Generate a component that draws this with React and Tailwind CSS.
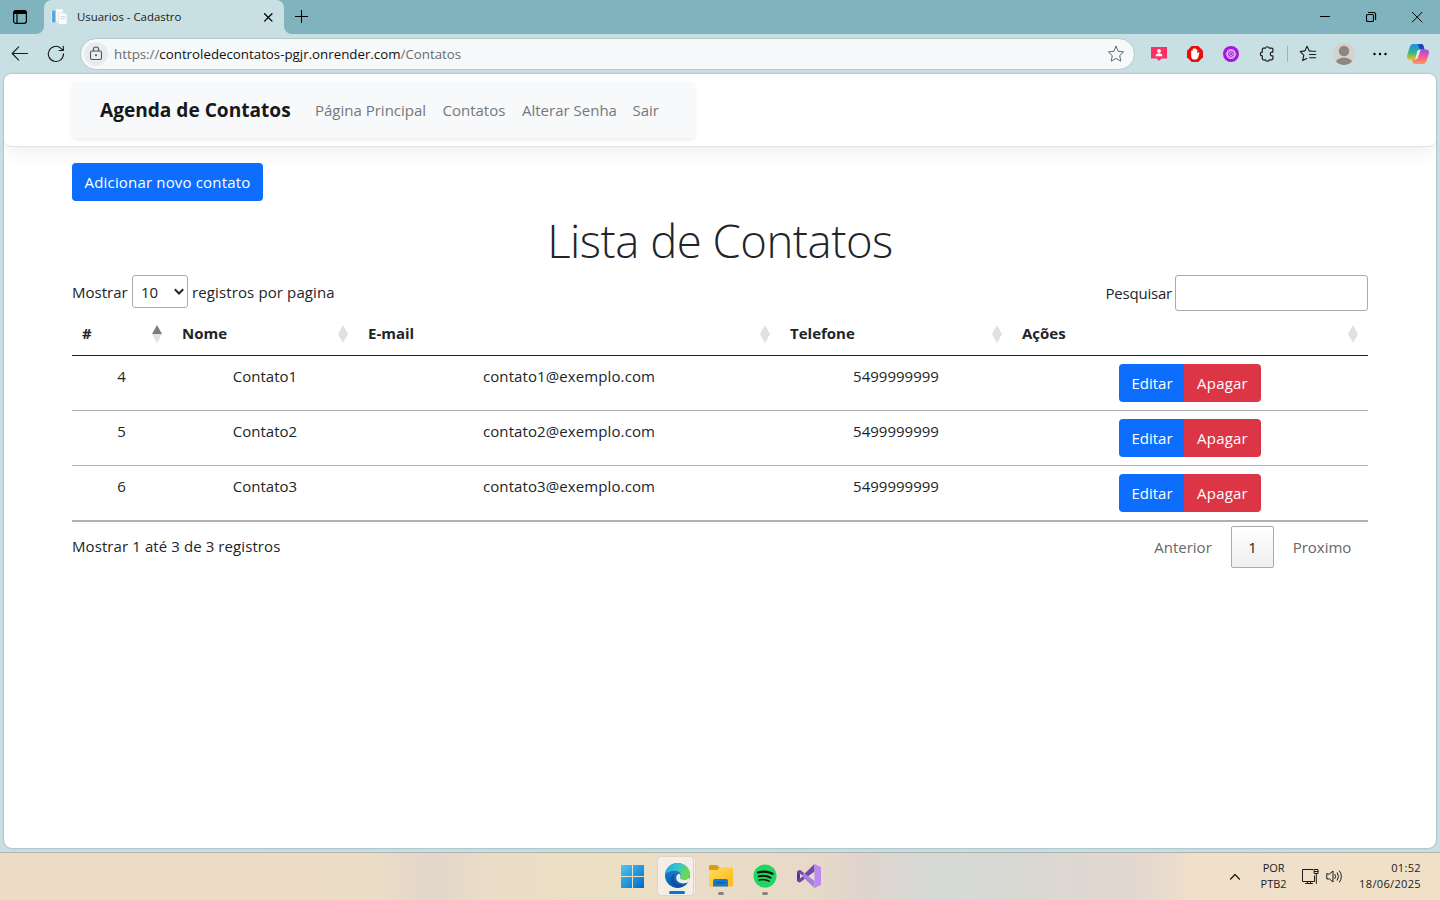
import React from "react";

const contacts = [
  { id: 4, name: "Contato1", email: "contato1@exemplo.com", phone: "5499999999" },
  { id: 5, name: "Contato2", email: "contato2@exemplo.com", phone: "5499999999" },
  { id: 6, name: "Contato3", email: "contato3@exemplo.com", phone: "5499999999" },
];

const columns = [
  { label: "#", width: "w-[100px]", active: true },
  { label: "Nome", width: "w-[186px]" },
  { label: "E-mail", width: "w-[422px]" },
  { label: "Telefone", width: "w-[232px]" },
  { label: "Ações", width: "w-[356px]" },
];

function Line({ className, box = 20, children, width = 1 }) {
  return (
    <svg className={className} viewBox={`0 0 ${box} ${box}`} fill="none" stroke="currentColor" strokeWidth={width} strokeLinecap="round" strokeLinejoin="round">
      {children}
    </svg>
  );
}

function TitleBar() {
  return (
    <div className="flex h-[34px] bg-[#c8dfe3] text-[#1b1b1b]">
      <div className="flex h-full w-[44px] items-center rounded-br-[8px] bg-[#7fb4be] pl-[12px]">
        <Line className="size-4 text-black" box={16} width={1.2}>
          <rect x="1.6" y="1.6" width="12.8" height="12.8" rx="2.4" />
          <path d="M1.6 4.2a2.6 2.6 0 0 1 2.6-2.6h7.6a2.6 2.6 0 0 1 2.6 2.6v.3H1.6Z" fill="currentColor" />
          <path d="M5 5v9" />
        </Line>
      </div>
      <div className="h-full bg-[#7fb4be]">
        <div className="flex h-full w-[240px] items-center rounded-t-[8px] bg-[#c8dfe3] pl-[7px] pr-[8px]">
          <svg className="size-4" viewBox="0 0 16 16">
            <path d="M0 1h9v13H0z" fill="#e6eef3" />
            <path d="M1 1.500h3.500v12H1z" fill="#5aa6d4" />
            <path d="M5 0h6l1 1v11H5z" fill="#f6f8f9" />
            <path d="M7.500 4h6.500l2 2v9.500H7.500z" fill="#fbfcfc" stroke="#cdd6da" strokeWidth=".5" />
            <path d="M9.500 7.500h5M9.500 9.500h5" stroke="#d3dade" />
          </svg>
          <span className="ml-[10px] flex-1 text-[11.4px] leading-4">Usuarios - Cadastro</span>
          <Line className="size-4 text-black" box={16} width={1.3}>
            <path d="m4.600 4.700 7.400 7.400M12 4.700l-7.400 7.400" />
          </Line>
        </div>
      </div>
      <div className="flex h-full flex-1 items-center rounded-bl-[8px] bg-[#7fb4be] pl-[9px] text-black">
        <Line className="size-4" box={16} width={1.1}>
          <path d="M8.500 2v13M2 8.500h13" strokeLinecap="butt" transform="translate(0 -1)" />
        </Line>
        <div className="ml-auto flex items-center">
          <Line className="mr-[30px] size-4" box={16} width={1}>
            <path d="M3 7.500h10" strokeLinecap="butt" />
          </Line>
          <Line className="mr-[30px] size-4" box={16} width={1.1}>
            <rect x="3.500" y="5.500" width="7" height="7" rx="1.300" />
            <path d="M5.500 3.500H10.600a2 2 0 0 1 2 2v5.100" />
          </Line>
          <Line className="mr-[15px] size-4" box={16} width={1}>
            <path d="m3.300 3.300 9.700 9.700M13 3.300l-9.700 9.700" />
          </Line>
        </div>
      </div>
    </div>
  );
}

function ToolBar() {
  return (
    <div className="flex h-[40px] items-center bg-[#c8dfe3] text-[#1b1b1b]">
      <Line className="ml-[10px] size-5" width={1.1}>
        <path d="M17.500 9.500H2.500M8.700 2.800 2.200 9.500l6.500 6.700" />
      </Line>
      <Line className="ml-[16px] size-5" width={1.1}>
        <path d="M17.500 9.800a7.600 7.600 0 1 1-2.500-5.500l2.200 2M17.300 2.200v4.300h-4.200" />
      </Line>
      <div className="ml-[14px] mb-px flex h-[32px] w-[1055px] items-center rounded-full border border-[#b9c7ca] bg-[#f6f9fa] pl-[3px] pr-[9px]">
        <div className="flex size-6 items-center justify-center rounded-full bg-[#e8ecee] text-[#555]">
          <Line className="size-4" box={16} width={1.1}>
            <rect x="2.500" y="5" width="11" height="8.500" rx="1.500" />
            <path d="M5.300 4.800V3.700a2.700 2.700 0 0 1 5.400 0v1.100" />
            <circle cx="8" cy="9.300" r=".5" fill="currentColor" />
          </Line>
        </div>
        <div className="ml-[6px] flex-1 text-[13.3px] leading-5 text-[#6a6c6d]">
          https://<span className="text-[#111]">controledecontatos-pgjr.onrender.com</span>/Contatos
        </div>
        <Line className="size-[18px] text-[#666]" box={18} width={1}>
          <path d="m9 1.300 2.300 5 5.400.6-4 3.700 1.100 5.500L9 13.400l-4.800 2.700 1.100-5.500-4-3.700 5.400-.6Z" />
        </Line>
      </div>
      <svg className="ml-[16px] size-4" viewBox="0 0 16 16">
        <path d="M0 1h16v11.500H10.200L8 15l-2.200-2.500H0Z" fill="#ff2e63" />
        <circle cx="8" cy="4.900" r="1.900" fill="#fff" />
        <path d="M4.500 10.200c0-4 7-4 7 0Z" fill="#fff" />
      </svg>
      <svg className="ml-[20px] size-4" viewBox="0 0 16 16">
        <path d="M4.700 0h6.600L16 4.700v6.600L11.300 16H4.700L0 11.300V4.700Z" fill="#e60f0f" />
        <path d="M4.200 8.200V5a.8.800 0 0 1 1.500 0V3.300a.8.800 0 0 1 1.600 0v-.5a.8.800 0 0 1 1.500 0v1a.8.800 0 0 1 1.500 0v4.400l.6-1.400c.5-1 1.700-.6 1.400.4l-1.100 3.800c-.6 2-1.700 2.600-3.200 2.600-2.600 0-3.800-1.400-3.800-3.400Z" fill="#fff" />
      </svg>
      <svg className="ml-[20px] size-4" viewBox="0 0 16 16" fill="none">
        <circle cx="8" cy="8" r="8" fill="#a215e0" />
        <g stroke="#f0d6fb" strokeWidth=".7">
          <ellipse cx="8" cy="8" rx="4.900" ry="3.200" />
          <ellipse cx="8" cy="8" rx="4.900" ry="3.200" transform="rotate(60 8 8)" />
          <ellipse cx="8" cy="8" rx="4.900" ry="3.200" transform="rotate(120 8 8)" />
          <circle cx="8" cy="8" r="1.500" />
        </g>
      </svg>
      <Line className="ml-[19px] size-[18px]" box={18} width={1.2}>
        <path d="M5.500 3.200h2a1.900 1.900 0 0 1 3.700 0h2.500a1.200 1.200 0 0 1 1.200 1.200v2.700h-.8a1.900 1.900 0 0 0 0 3.800h.8v2.700a1.200 1.200 0 0 1-1.200 1.200h-2.500a1.900 1.900 0 0 1-3.700 0h-2a1.200 1.200 0 0 1-1.200-1.200v-2.700a1.900 1.900 0 0 1 0-3.800V4.400a1.200 1.200 0 0 1 1.200-1.200Z" />
      </Line>
      <div className="ml-[11px] h-4 w-px bg-[#9fb2b6]" />
      <Line className="ml-[11px] size-[18px]" box={18} width={1.1}>
        <path d="M13 6.200 10.300 5.900 8 1.300 5.900 5.900l-4.700.7 3.600 3.500-1.100 5.500 4-2.200M11 6.300h5.700M10.500 9.500h6.200M10.500 12.700h6.200" />
      </Line>
      <svg className="ml-[16px] size-[22px]" viewBox="0 0 22 22">
        <circle cx="11" cy="11" r="11" fill="#d5d1cd" />
        <circle cx="11" cy="8" r="5.200" fill="#8d8782" />
        <path d="M3 18.500c2-5 14-5 16 0a11 11 0 0 1-16 0Z" fill="#8d8782" />
      </svg>
      <svg className="ml-[17px] size-4" viewBox="0 0 16 16">
        <circle cx="2.500" cy="8" r="1.200" /><circle cx="8" cy="8" r="1.200" /><circle cx="13.500" cy="8" r="1.200" />
      </svg>
      <svg className="ml-[18px] size-6" viewBox="0 0 24 24">
        <defs>
          <linearGradient id="cpA" x1="0" y1="0" x2="0" y2="1"><stop stopColor="#1d8fe8" /><stop offset=".5" stopColor="#2fb28e" /><stop offset="1" stopColor="#f3c60a" /></linearGradient>
          <linearGradient id="cpB" x1="0" y1="0" x2="0" y2="1"><stop stopColor="#a548ee" /><stop offset=".5" stopColor="#ee5a93" /><stop offset="1" stopColor="#ff9a52" /></linearGradient>
        </defs>
        <path d="M7 2h8.500c1 0 1.700 1 2 2l1 3.500h-3c-2 0-2.800 1-3.300 2.600l-1.400 5C10 17.500 9 18 7.500 18H4C1.500 18 .5 15.500 1.200 13L4 4.500C4.500 3 5.500 2 7 2Z" fill="url(#cpA)" />
        <path d="M12 2h3.500c1 0 1.700 1 2 2l1 3.500h-3Q13 7.500 12 2Z" fill="#1746b8" />
        <path d="M17 22H9c-1.500 0-2-1-2.500-2.500L6 17.800h2c1.500 0 2.500-1 3-2.800l1.400-5c.6-1.800 1.600-2.500 3.100-2.500H20c2.500 0 3.500 2 2.800 4.500l-2.500 7.500C19.700 21.200 18.500 22 17 22Z" fill="url(#cpB)" />
        <path d="m11.500 8.500 3.200-1-3.200 9-2.500 1.200Z" fill="#e5f1f4" />
      </svg>
    </div>
  );
}

function SiteHeader() {
  return (
    <header className="flex h-[73px] shrink-0 items-start rounded-b-[8px] border-b border-[#dee2e6] bg-white pl-[68px] pt-[8px] shadow-[0_8px_16px_rgba(0,0,0,0.05)]">
      <nav className="flex h-[56px] w-[623px] items-center rounded-[4px] bg-[#f8f9fa] pl-[28px] text-[15px] text-[#75787b] shadow-[0_2px_4px_rgba(0,0,0,0.075)]">
        <span className="w-[215px] whitespace-nowrap pt-px text-[19.1px] font-bold text-[#16181b]">Agenda de Contatos</span>
        <span className="w-[127.500px] whitespace-nowrap">Página Principal</span>
        <span className="w-[79.500px] whitespace-nowrap">Contatos</span>
        <span className="w-[110.500px] whitespace-nowrap">Alterar Senha</span>
        <span>Sair</span>
      </nav>
    </header>
  );
}

function SortMark({ active }) {
  return (
    <svg className="mt-px h-[18px] w-[10px]" viewBox="0 0 10 18">
      <path d="M5 0 10 9H0Z" fill={active ? "#7a7b7d" : "#e0e1e1"} />
      <path d="M5 18 0 9h10Z" fill="#e0e1e1" />
    </svg>
  );
}

function ContactsTable() {
  return (
    <table className="w-[1296px] table-fixed border-separate border-spacing-0 border-b border-[#b0b0b0]">
      <thead>
        <tr>
          {columns.map((c) => (
            <th key={c.label} className={`${c.width} h-[45px] border-b border-[#212529] p-0 text-left font-bold`}>
              <div className="flex items-center justify-between pl-[10px] pr-[10.500px]">
                <span>{c.label}</span>
                <SortMark active={c.active} />
              </div>
            </th>
          ))}
        </tr>
      </thead>
      <tbody>
        {contacts.map((c) => (
          <tr key={c.id} className="text-center align-top leading-6 [&>td]:border-b [&>td]:border-[#b0b0b0] [&>td]:pt-[8px]">
            <td className="pr-px">{c.id}</td>
            <td>{c.name}</td>
            <td className="tracking-[0.1px]">{c.email}</td>
            <td>{c.phone}</td>
            <td className="h-[55px]">
              <div className="flex justify-center text-white">
                <button className="h-[38px] w-[65px] rounded-l-[4px] bg-[#0d6efd] pl-px">Editar</button>
                <button className="h-[38px] w-[77px] rounded-r-[4px] bg-[#dc3545] tracking-[0.2px]">Apagar</button>
              </div>
            </td>
          </tr>
        ))}
      </tbody>
    </table>
  );
}

function Page() {
  return (
    <main className="mx-[4px] flex h-[774px] flex-col overflow-hidden rounded-[8px] bg-white shadow-[0_0_2px_rgba(0,60,70,0.45)]">
      <SiteHeader />
      <div className="flex flex-col px-[68px] pt-[16px] text-[15px] text-[#212529]">
        <button className="h-[38px] w-[191px] rounded-[4px] bg-[#0d6efd] tracking-[0.17px] text-white">Adicionar novo contato</button>
        <h1 className="mt-[10px] h-[58px] text-center text-[45.500px] font-light leading-[58px] tracking-[-0.5px]">Lista de Contatos</h1>
        <div className="mt-[6px] flex h-[36px] items-start justify-between">
          <div className="flex items-center">
            <span className="w-[60px] pt-[2px]">Mostrar</span>
            <div className="flex h-[33px] w-[56px] items-center rounded-[3px] border border-[#aaa] pl-[8px]">
              <span className="w-[33px] pt-[2px]">10</span>
              <Line className="size-[10px]" box={10} width={2}>
                <path d="m.8 2.300 4.200 4.200 4.200-4.200" strokeLinecap="butt" strokeLinejoin="miter" />
              </Line>
            </div>
            <span className="ml-[4px] pt-[2px] tracking-[0.12px]">registros por pagina</span>
          </div>
          <div className="flex items-center">
            <span className="mr-[3px] tracking-[-0.2px]">Pesquisar</span>
            <div className="h-[36px] w-[193px] rounded-[3px] border border-[#aaa]" />
          </div>
        </div>
        <ContactsTable />
        <div className="flex justify-between">
          <span className="pt-[12px] leading-6 tracking-[0.09px]">Mostrar 1 até 3 de 3 registros</span>
          <div className="mt-[4px] flex h-[42px] gap-[2px] text-[#666] [&>span]:flex [&>span]:items-center [&>span]:justify-center">
            <span className="w-[92px]">Anterior</span>
            <span className="w-[43px] rounded-[2px] border border-[#aaa] bg-linear-to-b from-white to-[#efefef] text-[#212529]">1</span>
            <span className="w-[92px]">Proximo</span>
          </div>
        </div>
      </div>
    </main>
  );
}

function Taskbar() {
  return (
    <footer className="flex h-[48px] items-stretch border-t border-[#b4b2ac] bg-[linear-gradient(90deg,#eddcc5_0%,#ecddc7_26%,#e2d6cb_30%,#ebddc7_34%,#ebe0c4_43%,#ebdcc8_48%,#e8dac8_56%,#dfd4ce_60%,#d5dad7_65%,#d9d8d3_71%,#e3d7cf_79%,#f0e0ca_83%,#f1e0c8_100%)] text-[#1b1b1b]">
      <div className="flex items-start pl-[620px] pt-[3px]">
        <svg className="mr-[13px] mt-[8px] size-[24px]" viewBox="0 0 24 24">
          <defs><linearGradient id="win" x1="0" y1="0" x2="1" y2="1"><stop stopColor="#4cc8f6" /><stop offset="1" stopColor="#0067c8" /></linearGradient></defs>
          <path d="M1 1h11v11H1zM13 1h11v11H13zM1 13h11v11H1zM13 13h11v11H13z" fill="url(#win)" />
        </svg>
        <div className="flex h-[40px] w-[39px] rounded-[4px] border border-[#ded4c9] bg-[#f5eee6]">
          <div className="flex w-[36px] shrink-0 flex-col items-center rounded-[4px] border-r border-[#d8cec2] pl-[3px] pt-[6px]">
            <svg className="size-[25px]" viewBox="0 0 24 24">
              <defs>
                <linearGradient id="edA" x1="0" y1="0" x2="1" y2=".4"><stop stopColor="#1f9fe0" /><stop offset=".5" stopColor="#34c5d2" /><stop offset="1" stopColor="#6fdc4a" /></linearGradient>
                <linearGradient id="edB" x1="0" y1="0" x2="0" y2="1"><stop stopColor="#1a8ad8" /><stop offset="1" stopColor="#0b5cb0" /></linearGradient>
              </defs>
              <circle cx="12" cy="12" r="12" fill="url(#edB)" />
              <path d="M0 11C1 4 6 0 12 0c7 0 12 5 12 10.500 0 3.500-2.800 5.500-5.800 5.500-2.500 0-4.200-1-3.700-2 1.500-2.500.2-6.500-4.500-6.500C5 7.500 1.500 9 0 11Z" fill="url(#edA)" />
              <path d="M10 10c-3 3-2 10 5 11 3 .4 5.500-.6 7-2.500C18 25 7 25.500 5.500 17 5 14 7 11 10 10Z" fill="#124e9c" />
              <path d="M14.500 14c-.5 1 1.200 2 3.700 2 2 0 3.800-.7 5.200-2.200l.6.700c-.4 1.600-.9 2.800-1.700 4-5 2.500-11.500.5-11.500-4 0-2 1-3.500 2.300-4.200 1.900.5 2.200 2.300 1.400 3.700Z" fill="#f3eee6" />
            </svg>
            <div className="mt-[3px] h-[3px] w-[16px] rounded-full bg-[#0078d4]" />
          </div>
        </div>
        <div className="ml-[13px] flex flex-col items-center pt-[8px]">
          <svg className="size-[24px]" viewBox="0 0 24 24">
            <defs><linearGradient id="fol" x1="0" y1="0" x2="1" y2="1"><stop stopColor="#ffdb62" /><stop offset="1" stopColor="#f9b914" /></linearGradient></defs>
            <path d="M1.500 1H8l2.500 2.500V8H0V2.500C0 1.700.7 1 1.500 1Z" fill="#dc9a10" />
            <path d="M0 6h8l2.500-2.500h12c.8 0 1.500.7 1.500 1.500v16c0 .8-.7 1.500-1.500 1.500h-21C.7 22.500 0 21.800 0 21Z" fill="url(#fol)" />
            <path d="M4 22.500v-5.500a2 2 0 0 1 2-2h11a2 2 0 0 1 2 2v5.500Z" fill="#1479d0" />
            <path d="M7.500 18.700h8" stroke="#0a5ba7" strokeWidth="1.200" strokeLinecap="round" />
          </svg>
          <div className="mt-[4px] h-[3px] w-[6px] rounded-full bg-[#8b8379]" />
        </div>
        <div className="ml-[20px] flex flex-col items-center pt-[8px]">
          <svg className="size-[24px]" viewBox="0 0 24 24" fill="none" stroke="#111" strokeLinecap="round">
            <circle cx="12" cy="12" r="11.500" fill="#1ed760" stroke="none" />
            <path d="M5 8.500c5-1.500 10.500-1 14.500 1.300" strokeWidth="2.200" />
            <path d="M5.700 12.400c4.500-1.200 8.500-.7 12 1.300" strokeWidth="1.800" />
            <path d="M6.200 16c3.700-1 7-.5 10 1.200" strokeWidth="1.500" />
          </svg>
          <div className="mt-[4px] h-[3px] w-[6px] rounded-full bg-[#8b8379]" />
        </div>
        <svg className="ml-[20px] mt-[8px] size-[24px]" viewBox="0 0 24 24">
          <path d="M0 7.500 3 6v12.500L0 17Z" fill="#52318f" />
          <path d="M3 18.500 0 17 17.500 0v7.500Z" fill="#6f49a8" />
          <path d="m3 6 14.500 11v7L0 7.500Z" fill="#a67fe0" />
          <path d="M0 7.500 3 6l4 3-3 3Z" fill="#6e48a9" />
          <path d="M3 9.500v5L5.700 12Z" fill="#ebdccb" />
          <path d="M17.500 0 24 3v18l-6.500 3Z" fill="#bb8af0" />
        </svg>
      </div>
      <div className="flex flex-1 items-center justify-end pr-[19px] text-[11px] leading-4">
        <Line className="mr-[19px] size-[12px]" box={12} width={1.2}><path d="m1.200 8.500 4.800-5 4.800 5" strokeLinecap="butt" /></Line>
        <div className="mb-[2px] mr-[15px] w-[27px] whitespace-nowrap text-center">POR<br />PTB2</div>
        <Line className="mr-[7px] size-[17px]" box={17} width={1}>
          <path d="M11 1.500H.5v12h12V8M3.500 15.500h7M5.500 13.500v2M8.500 13.500v2M12.500 1.500h3.500v4h-3.500zM14.300 5.500v10M12.500 3.500H16" strokeLinejoin="miter" />
        </Line>
        <Line className="mr-[16px] size-[17px]" box={17} width={1}>
          <path d="M.8 6v5h2.700L7 14V3L3.500 6ZM9 6.500q1.300 2 0 4M11.300 4.800q2.500 3.700 0 7.400M13.500 3q4 5.500 0 11" />
        </Line>
        <div className="mb-[2px] text-right text-[11.100px] tracking-[0.3px]">01:52<br />18/06/2025</div>
      </div>
    </footer>
  );
}

export default function App() {
  return (
    <div className="flex h-[900px] w-[1440px] flex-col overflow-hidden bg-[#c8dfe3] font-['Open_Sans','Noto_Sans',sans-serif]">
      <TitleBar />
      <ToolBar />
      <Page />
      <div className="h-[4px]" />
      <Taskbar />
    </div>
  );
}
